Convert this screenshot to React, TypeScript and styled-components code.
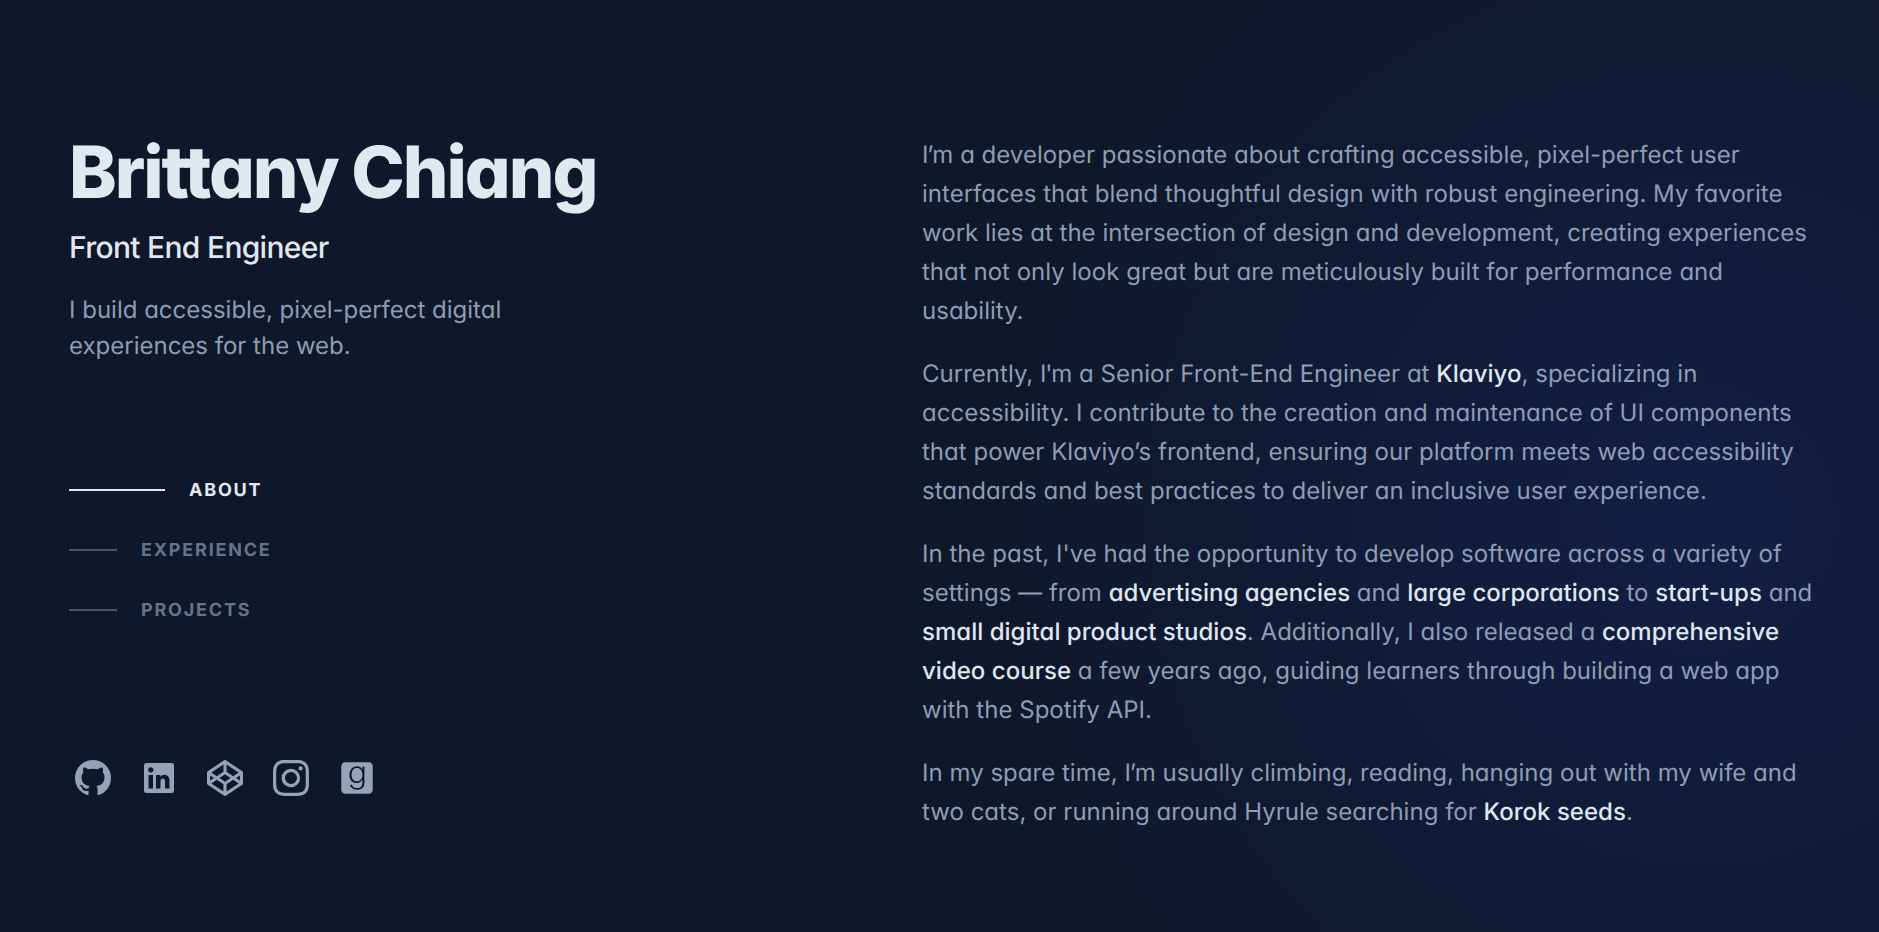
import React from 'react';
import styled, { createGlobalStyle } from 'styled-components';
import { BsGithub, BsInstagram } from 'react-icons/bs';
import { FaCodepen, FaGoodreads } from 'react-icons/fa';

const GlobalStyle = createGlobalStyle`
  html, body {
    margin: 0;
    padding: 0;
    background: #0f172a;
  }
  body {
    font-family: 'Inter', 'Liberation Sans', sans-serif;
    font-feature-settings: 'cv11';
    text-rendering: geometricPrecision;
    color: #8e9db3;
  }
`;

const Page = styled.div`
  height: 932px;
  overflow: hidden;
  box-sizing: border-box;
  display: grid;
  grid-template-columns: 853px 900px;
  padding: 135px 0 0 69px;
  background: radial-gradient(900px at 1700px 520px, rgba(29, 78, 216, 0.15), transparent 80%);
`;

const Header = styled.header`
  display: flex;
  flex-direction: column;
  padding-top: 2px;
`;

const Name = styled.h1`
  margin: 0;
  font-size: 72px;
  line-height: 72px;
  font-weight: 800;
  letter-spacing: -2.05px;
  color: #e2e8f0;
`;

const Role = styled.h2`
  margin: 18px 0 0;
  font-size: 30px;
  line-height: 42px;
  font-weight: 500;
  letter-spacing: -0.7px;
  color: #e2e8f0;
`;

const Tagline = styled.p`
  margin: 23px 0 0;
  max-width: 480px;
  font-size: 24px;
  line-height: 36px;
`;

const Nav = styled.ul`
  list-style: none;
  margin: 96px 0 0;
  padding: 0;
`;

const NavItem = styled.li<{ $active?: boolean }>`
  display: flex;
  align-items: center;
  height: 60px;
  gap: 24px;
  font-size: 18px;
  font-weight: 700;
  letter-spacing: 1.8px;
  text-transform: uppercase;
  color: ${(p) => (p.$active ? '#e2e8f0' : '#64748b')};

  &::before {
    content: '';
    height: 2px;
    width: ${(p) => (p.$active ? '96px' : '48px')};
    background: ${(p) => (p.$active ? '#e2e8f0' : '#475569')};
  }
`;

const Socials = styled.ul`
  list-style: none;
  display: flex;
  gap: 30px;
  margin: 120px 0 0 6px;
  padding: 0;
  color: #94a3b8;

  svg {
    display: block;
    width: 36px;
    height: 36px;
  }
`;

const Main = styled.main`
  font-size: 24px;
  line-height: 39px;
  letter-spacing: 0.02px;
`;

const Paragraph = styled.p`
  margin: 0 0 24px;
`;

const Strong = styled.span`
  font-weight: 500;
  color: #dfe6ef;
`;

// "I'm" sits tighter in the reference
const Kerned = styled.span`
  letter-spacing: -1.2px;
`;

const LinkedinIcon = () => (
  <svg viewBox="0 0 24 24" fill="currentColor" aria-hidden="true">
    <path d="M20.5 2h-17A1.5 1.5 0 002 3.5v17A1.5 1.5 0 003.5 22h17a1.5 1.5 0 001.5-1.5v-17A1.5 1.5 0 0020.5 2zM8 19H5v-9h3zM6.5 8.25A1.75 1.75 0 118.3 6.5a1.78 1.78 0 01-1.8 1.75zM19 19h-3v-4.74c0-1.42-.6-1.93-1.38-1.93A1.74 1.74 0 0013 14.19a.66.66 0 000 .14V19h-3v-9h2.9v1.3a3.11 3.11 0 012.7-1.4c1.55 0 3.36.86 3.36 3.66z" />
  </svg>
);

export default function App() {
  return (
    <Page>
      <GlobalStyle />
      <Header>
        <Name>Brittany Chiang</Name>
        <Role>Front End Engineer</Role>
        <Tagline>I build accessible, pixel-perfect digital experiences for the web.</Tagline>
        <Nav>
          <NavItem $active>About</NavItem>
          <NavItem>Experience</NavItem>
          <NavItem>Projects</NavItem>
        </Nav>
        <Socials>
          <li><BsGithub /></li>
          <li><LinkedinIcon /></li>
          <li><FaCodepen /></li>
          <li><BsInstagram /></li>
          <li><FaGoodreads /></li>
        </Socials>
      </Header>
      <Main>
        <Paragraph>
          <Kerned>I’</Kerned>m a developer passionate about crafting accessible, pixel-perfect user interfaces that blend thoughtful design with robust engineering. My favorite work lies at the intersection of design and development, creating experiences that not only look great but are meticulously built for performance and usability.
        </Paragraph>
        <Paragraph>
          Currently, <Kerned>I'</Kerned>m a Senior Front-End Engineer at <Strong>Klaviyo</Strong>, specializing in accessibility. I contribute to the creation and maintenance of UI components that power Klaviyo’s frontend, ensuring our platform meets web accessibility standards and best practices to deliver an inclusive user experience.
        </Paragraph>
        <Paragraph>
          In the past, I've had the opportunity to develop software across a variety of settings — from <Strong>advertising agencies</Strong> and <Strong>large corporations</Strong> to <Strong>start-ups</Strong> and <Strong>small digital product studios</Strong>. Additionally, I also released a <Strong>comprehensive video course</Strong> a few years ago, guiding learners through building a web app with the Spotify API.
        </Paragraph>
        <Paragraph>
          In my spare time, <Kerned>I’</Kerned>m usually climbing, reading, hanging out with my wife and two cats, or running around Hyrule searching for <Strong>Korok seeds</Strong>.
        </Paragraph>
      </Main>
    </Page>
  );
}
